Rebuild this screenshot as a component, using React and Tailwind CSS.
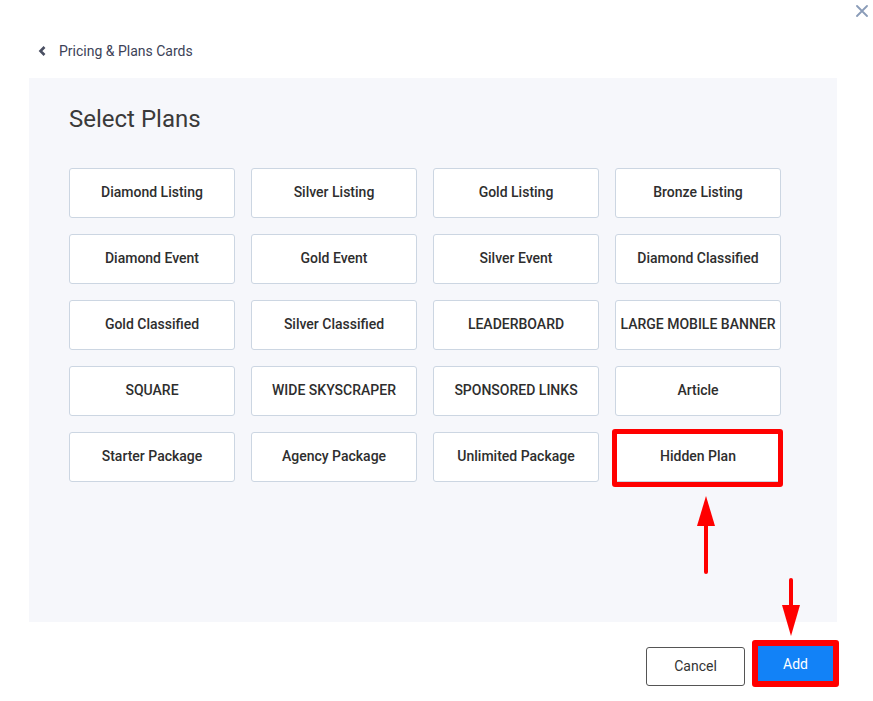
import React from "react";

const plans = [
  "Diamond Listing", "Silver Listing", "Gold Listing", "Bronze Listing",
  "Diamond Event", "Gold Event", "Silver Event", "Diamond Classified",
  "Gold Classified", "Silver Classified", "LEADERBOARD", "LARGE MOBILE BANNER",
  "SQUARE", "WIDE SKYSCRAPER", "SPONSORED LINKS", "Article",
  "Starter Package", "Agency Package", "Unlimited Package", "Hidden Plan",
];

export default function App() {
  return (
    <div
      className="relative w-[873px] h-[701px] bg-white overflow-hidden"
      style={{ fontFamily: "Roboto, 'Noto Sans', sans-serif" }}
    >
      {/* close */}
      <button className="absolute right-[5px] top-[5px] w-[12px] h-[12px]">
        <svg viewBox="0 0 12 12" className="w-[12px] h-[12px]">
          <path d="M1 1 L11 11 M11 1 L1 11" stroke="#8a9cb8" strokeWidth="1.8" strokeLinecap="round" />
        </svg>
      </button>

      {/* back link */}
      <div className="flex items-center pt-[41px] pl-[38px] h-[61px]">
        <svg viewBox="0 0 8 10" className="w-[8px] h-[10px]">
          <path d="M6.5 1 L2.5 5 L6.5 9" fill="none" stroke="#4a4f62" strokeWidth="2.6" />
        </svg>
        <span className="ml-[13px] text-[14px] leading-[20px] text-[#3c4257]">Pricing &amp; Plans Cards</span>
      </div>

      {/* plans panel */}
      <div className="ml-[29px] mt-[17px] w-[808px] h-[544px] bg-[#f6f7fb] pl-[40px] pt-[25px]">
        <h1 className="text-[24px] leading-[32px] text-[#3a3a3a]">Select Plans</h1>
        <div className="mt-[33px] grid grid-cols-[repeat(4,166px)] gap-[16px]">
          {plans.map((p) => (
            <div
              key={p}
              className="relative h-[50px] flex items-center justify-center pb-[1px] bg-white border border-[#ccd6e2] rounded-[3px] text-[14px] font-medium text-[#2e2e2e]"
            >
              {p}
              {p === "Hidden Plan" && (
                <div className="absolute -left-[4px] -right-[3px] -top-[4px] -bottom-[6px] border-[5px] border-[#ff0000] rounded-[3px]" />
              )}
            </div>
          ))}
        </div>
      </div>

      {/* footer */}
      <div className="flex justify-end items-start gap-[7px] pr-[34px] mt-[18px]">
        <button className="mt-[7px] w-[99px] h-[39px] border border-[#555] rounded-[3px] text-[14px] text-[#333] bg-white">
          Cancel
        </button>
        <div className="border-[6px] border-[#ff0000] rounded-[3px]">
          <button className="w-[75px] h-[35px] pt-[2px] bg-[#1282f7] text-white text-[14px]">Add</button>
        </div>
      </div>

      {/* arrows */}
      <svg className="absolute left-[690px] top-[490px]" width="32" height="90" viewBox="0 0 32 90">
        <path d="M16 35 L16 82" stroke="#ff0000" strokeWidth="4" strokeLinecap="round" />
        <path d="M7 36 L16 6 L25 36 Z" fill="#ff0000" />
      </svg>
      <svg className="absolute left-[775px] top-[572px]" width="32" height="68" viewBox="0 0 32 68">
        <path d="M16 8 L16 36" stroke="#ff0000" strokeWidth="4" strokeLinecap="round" />
        <path d="M7 33 L16 64 L25 33 Z" fill="#ff0000" />
      </svg>
    </div>
  );
}
